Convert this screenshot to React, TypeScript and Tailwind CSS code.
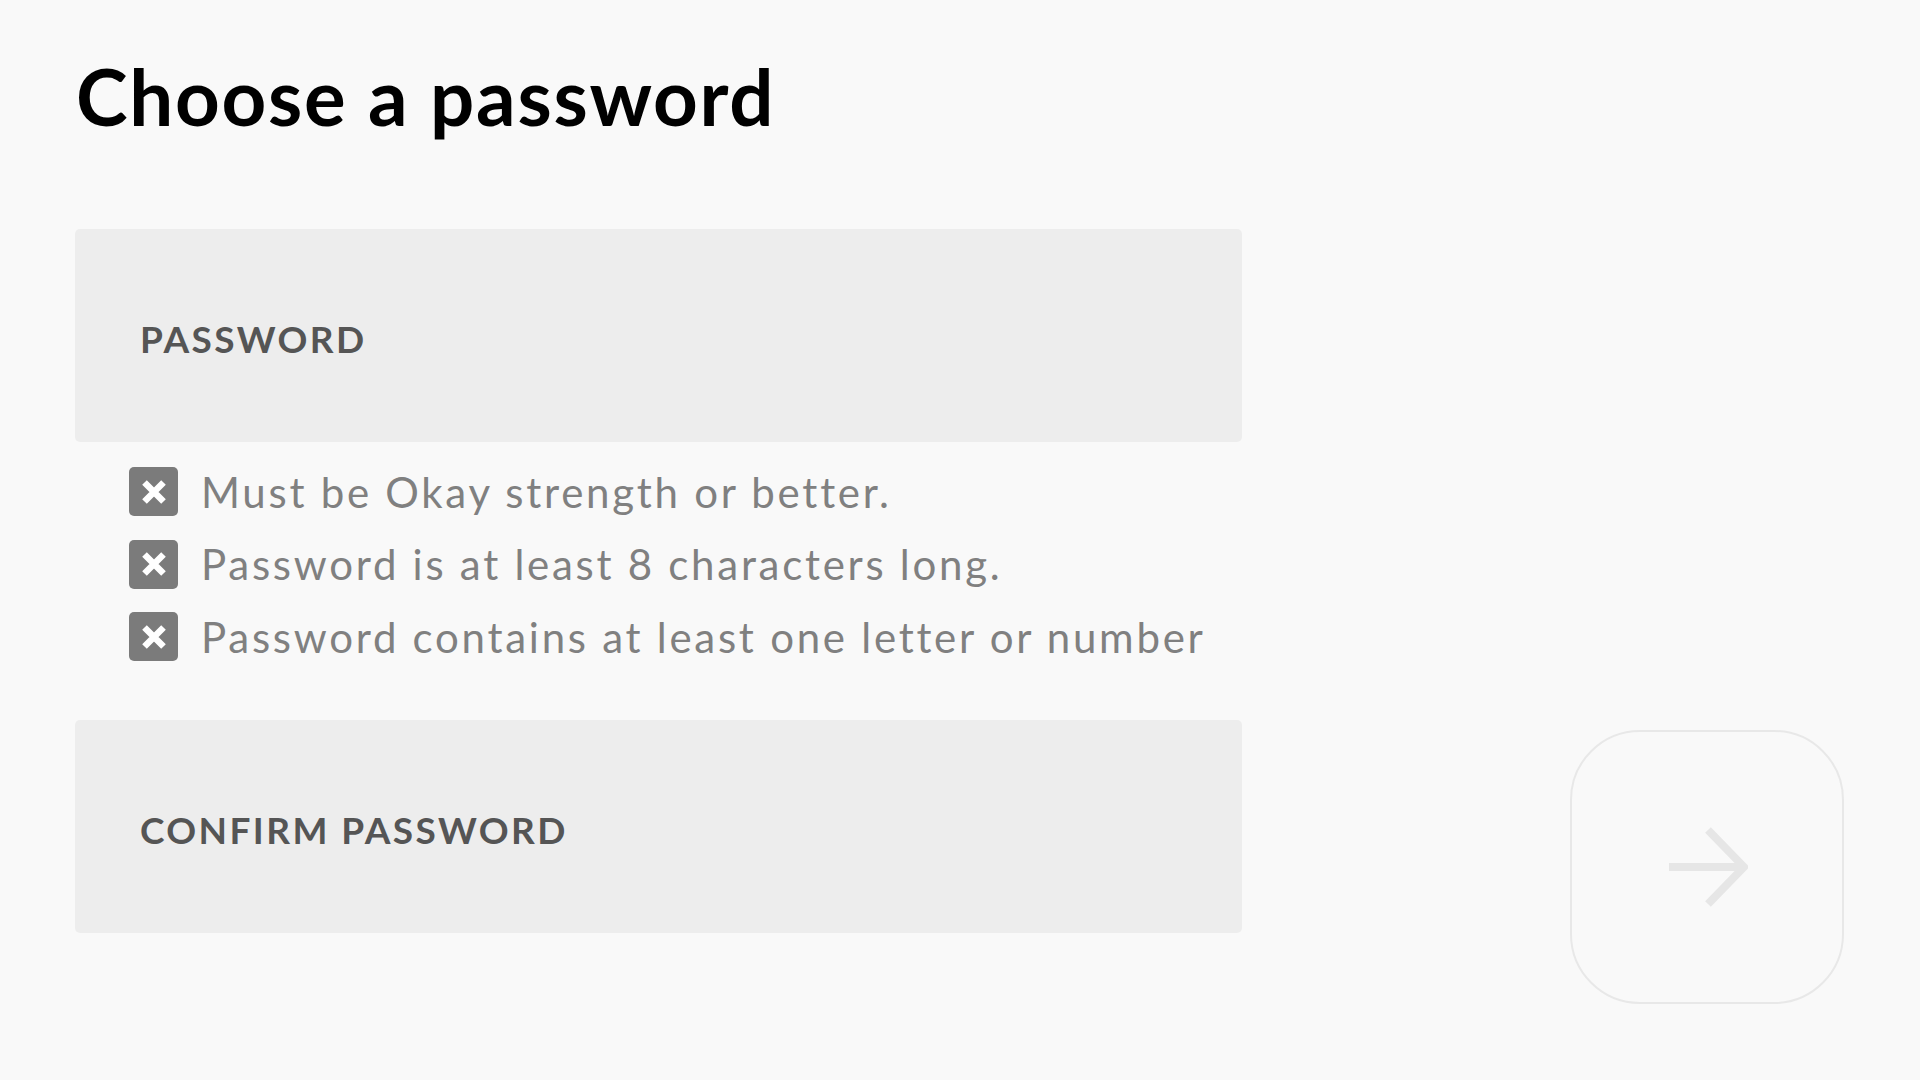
import React from 'react';

const rules = [
  'Must be Okay strength or better.',
  'Password is at least 8 characters long.',
  'Password contains at least one letter or number',
];

function FailIcon() {
  return (
    <div className="w-[49px] h-[49px] shrink-0 rounded-[5px] bg-[#7b7b7b] flex items-center justify-center">
      <svg width="26" height="26" viewBox="0 0 26 26">
        <path d="M3.5 3.5 L22.5 22.5 M22.5 3.5 L3.5 22.5" stroke="#ffffff" strokeWidth="6.5" strokeLinecap="butt" fill="none" />
      </svg>
    </div>
  );
}

function Field({ label }: { label: string }) {
  return (
    <div className="h-[213px] w-full rounded-[5px] bg-[#ededed] flex items-center pl-[65px] pt-[6px]">
      <span className="text-[37px] leading-none font-bold tracking-[0.065em] text-[#555555]">{label}</span>
    </div>
  );
}

export default function App() {
  return (
    <div
      className="w-full h-screen bg-[#f9f9f9] flex overflow-hidden"
      style={{ fontFamily: 'Lato, "Open Sans", sans-serif' }}
    >
      {/* 表单 */}
      <div className="w-[1167px] ml-[75px] pt-[57px] shrink-0 flex flex-col">
        <h1 className="text-[78px] leading-none font-bold tracking-[0.022em] text-black mb-[94px] pl-[1px]">Choose a password</h1>

        <Field label="PASSWORD" />

        <ul className="mt-[25px] pl-[54px] flex flex-col gap-[23.5px]">
          {rules.map(r => (
            <li key={r} className="h-[49px] flex items-center gap-[23px]">
              <FailIcon />
              <span className="text-[42px] leading-none tracking-[0.065em] text-[#808080]">{r}</span>
            </li>
          ))}
        </ul>

        <div className="mt-[59px]">
          <Field label="CONFIRM PASSWORD" />
        </div>
      </div>

      {/* 下一步按钮 */}
      <div className="flex-1 flex items-end justify-end pr-[76px] pb-[76px]">
        <button className="w-[274px] h-[274px] rounded-[70px] border-2 border-[#e8e8e8] flex items-center justify-center">
          <svg width="80" height="80" viewBox="0 0 80 80" className="ml-[1px]">
            <path d="M1 40 L76 40" stroke="#e6e6e6" strokeWidth="8" fill="none" />
            <path d="M40 3 L76 40 L40 77" stroke="#e6e6e6" strokeWidth="8" fill="none" strokeLinejoin="miter" />
          </svg>
        </button>
      </div>
    </div>
  );
}
